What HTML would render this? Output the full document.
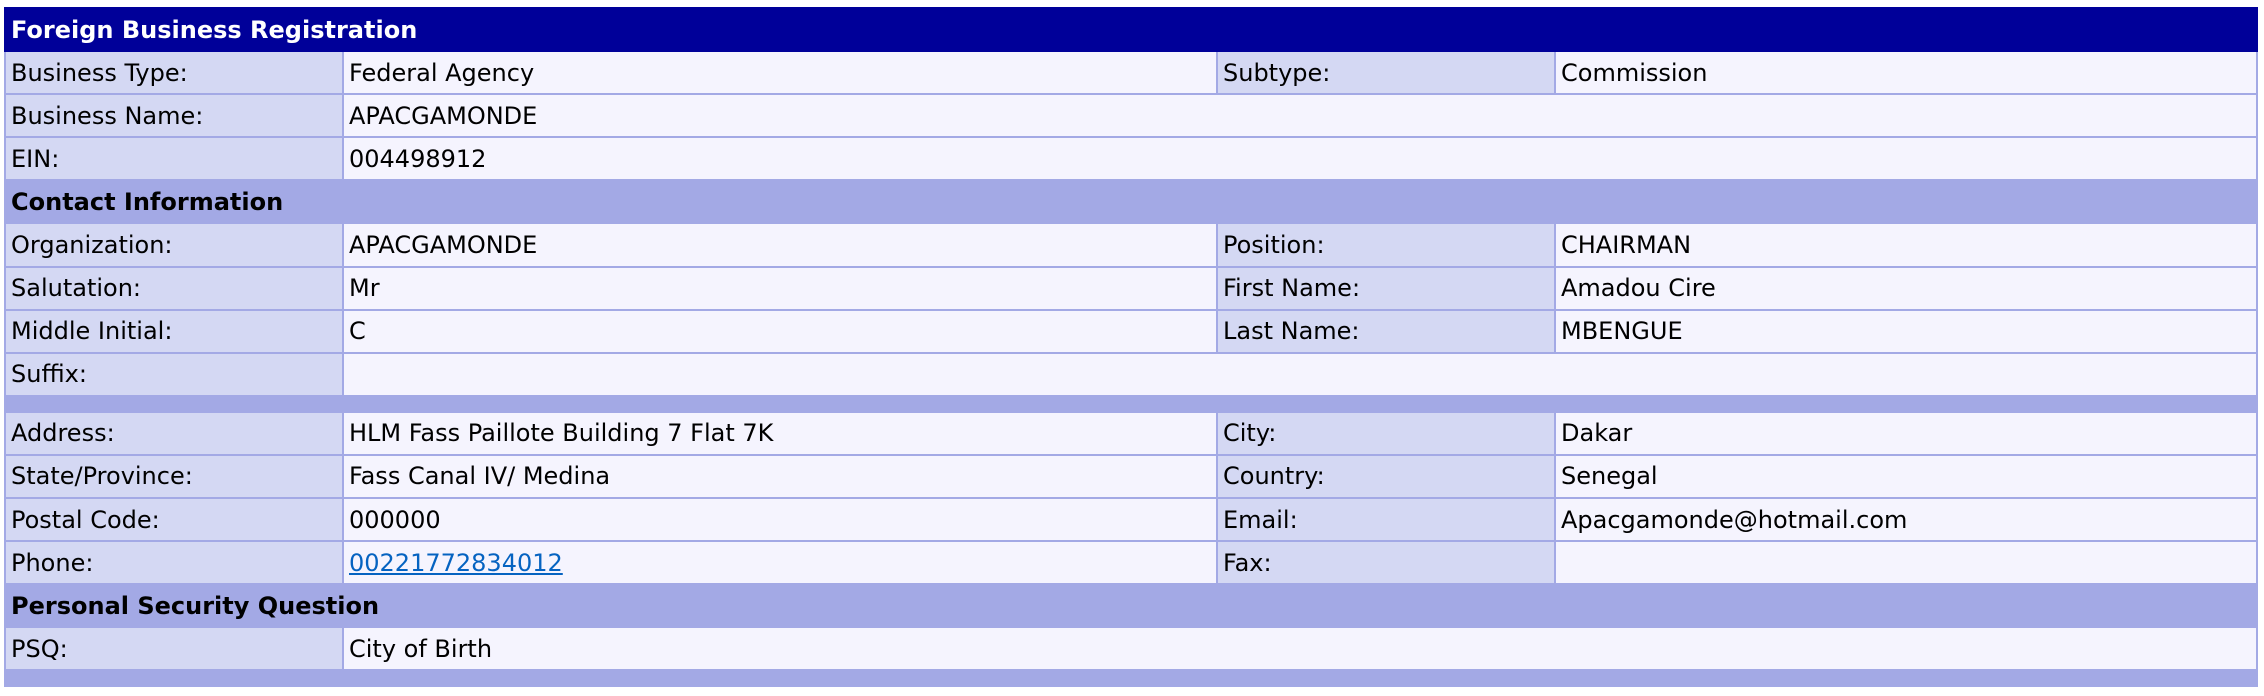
<!DOCTYPE html>
<html><head><meta charset="utf-8"><style>
html,body{margin:0;padding:0;background:#fff;width:2264px;height:696px;overflow:hidden}
table{position:absolute;left:4px;top:7px;width:2252px;border-collapse:collapse;table-layout:fixed;font-family:"DejaVu Sans","Liberation Sans",sans-serif;font-size:24px;color:#000}
td{border:2px solid #a3a9e5;height:41.1px;padding:0 0 0 5px;white-space:nowrap;overflow:hidden}
td.l{background:#d4d8f3}
td.v{background:#f5f4fe}
tr.h td{background:#000099;color:#fff;font-weight:bold;border-color:#000099}
tr.s td{background:#a3a9e5;font-weight:bold}
tr.sp td{background:#a3a9e5;height:14px;padding:0}
a{color:#0563c1}
</style></head><body>
<table>
<colgroup><col style="width:338px"><col style="width:874px"><col style="width:338px"><col style="width:702px"></colgroup>
<tr class="h"><td colspan="4">Foreign Business Registration</td></tr>
<tr><td class="l">Business Type:</td><td class="v">Federal Agency</td><td class="l">Subtype:</td><td class="v">Commission</td></tr>
<tr><td class="l">Business Name:</td><td class="v" colspan="3">APACGAMONDE</td></tr>
<tr><td class="l">EIN:</td><td class="v" colspan="3">004498912</td></tr>
<tr class="s"><td colspan="4">Contact Information</td></tr>
<tr><td class="l">Organization:</td><td class="v">APACGAMONDE</td><td class="l">Position:</td><td class="v">CHAIRMAN</td></tr>
<tr><td class="l">Salutation:</td><td class="v">Mr</td><td class="l">First Name:</td><td class="v">Amadou Cire</td></tr>
<tr><td class="l">Middle Initial:</td><td class="v">C</td><td class="l">Last Name:</td><td class="v">MBENGUE</td></tr>
<tr><td class="l">Suffix:</td><td class="v" colspan="3"></td></tr>
<tr class="sp"><td colspan="4"></td></tr>
<tr><td class="l">Address:</td><td class="v">HLM Fass Paillote Building 7 Flat 7K</td><td class="l">City:</td><td class="v">Dakar</td></tr>
<tr><td class="l">State/Province:</td><td class="v">Fass Canal IV/ Medina</td><td class="l">Country:</td><td class="v">Senegal</td></tr>
<tr><td class="l">Postal Code:</td><td class="v">000000</td><td class="l">Email:</td><td class="v">Apacgamonde@hotmail.com</td></tr>
<tr><td class="l">Phone:</td><td class="v"><a href="#">00221772834012</a></td><td class="l">Fax:</td><td class="v"></td></tr>
<tr class="s"><td colspan="4">Personal Security Question</td></tr>
<tr><td class="l">PSQ:</td><td class="v" colspan="3">City of Birth</td></tr>
<tr class="sp"><td colspan="4"></td></tr>
</table>
</body></html>
